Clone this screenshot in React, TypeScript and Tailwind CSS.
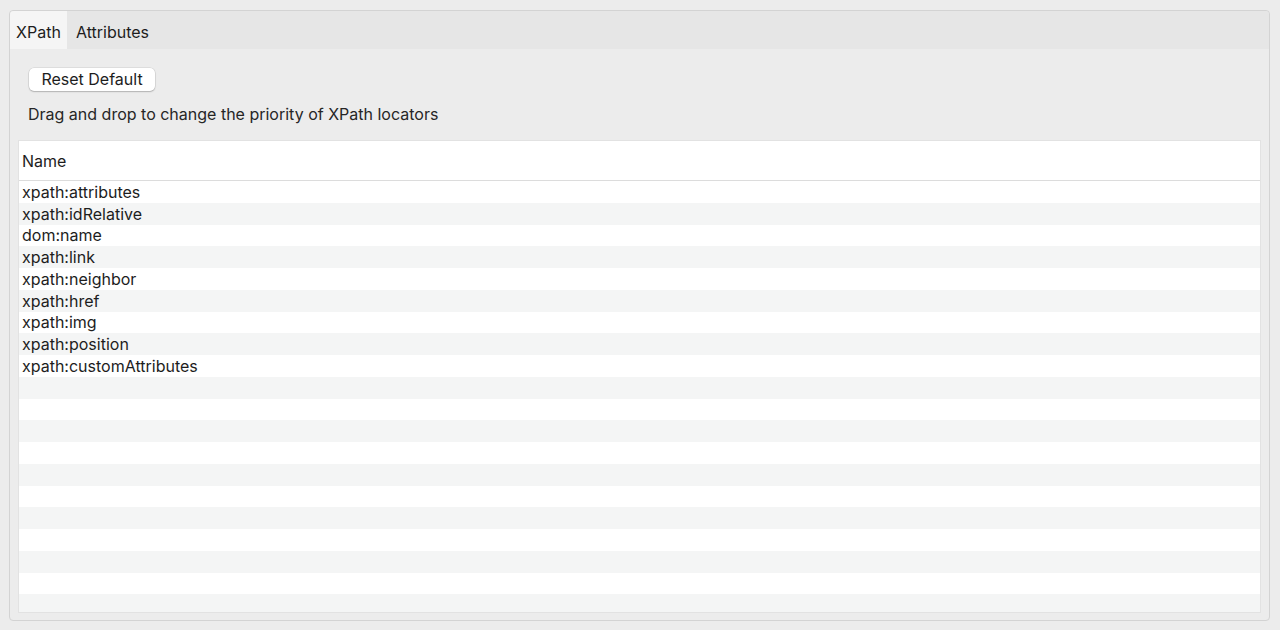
import React from 'react';

const locators = [
  'xpath:attributes',
  'xpath:idRelative',
  'dom:name',
  'xpath:link',
  'xpath:neighbor',
  'xpath:href',
  'xpath:img',
  'xpath:position',
  'xpath:customAttributes',
];

const rows = Array.from({ length: 20 }, (_, i) => locators[i] ?? '');

export default function App() {
  return (
    <div
      className="h-[630px] w-[1280px] bg-[#ececec] pt-[10px] pl-[9px] text-[#1d1d1d]"
      style={{ fontFamily: 'Inter, "Liberation Sans", sans-serif' }}
    >
      <div className="flex h-[611px] w-[1261px] flex-col rounded-[4px] border border-[#d3d3d3] bg-[#ececec]">
        {/* tab strip */}
        <div className="flex h-[38px] shrink-0 items-stretch rounded-t-[4px] bg-[#e6e6e6] text-[16px]">
          <div className="flex w-[57px] items-center justify-center rounded-tl-[4px] bg-[#f5f5f5] pt-[4px]">
            XPath
          </div>
          <div className="flex items-center pl-[9px] pt-[4px]">Attributes</div>
        </div>

        <div className="flex min-h-0 flex-1 flex-col px-[8px] pb-[7px]">
          <div className="pl-[11px] pt-[18px]">
            <button className="h-[23px] w-[126px] rounded-[5px] bg-white text-[16px] leading-none shadow-[0_0_0_0.5px_rgba(0,0,0,0.12),0_1px_1.5px_rgba(0,0,0,0.2)]">
              Reset Default
            </button>
          </div>
          <p className="pl-[10px] pt-[13px] text-[16px] leading-[20px] text-[#262626]">
            Drag and drop to change the priority of XPath locators
          </p>

          <div className="mt-[16px] flex min-h-0 flex-1 flex-col overflow-hidden border border-[#e2e2e2] bg-white">
            <div className="flex h-[40px] shrink-0 items-center border-b border-[#dcdcdc] pl-[3px] text-[16px]">
              Name
            </div>
            <div className="min-h-0 flex-1 overflow-hidden">
              {rows.map((name, i) => (
                <div
                  key={i}
                  className={`flex h-[21.75px] items-center pl-[3px] text-[16px] ${
                    i % 2 === 0 ? 'bg-white' : 'bg-[#f4f5f5]'
                  }`}
                >
                  {name}
                </div>
              ))}
            </div>
          </div>
        </div>
      </div>
    </div>
  );
}
